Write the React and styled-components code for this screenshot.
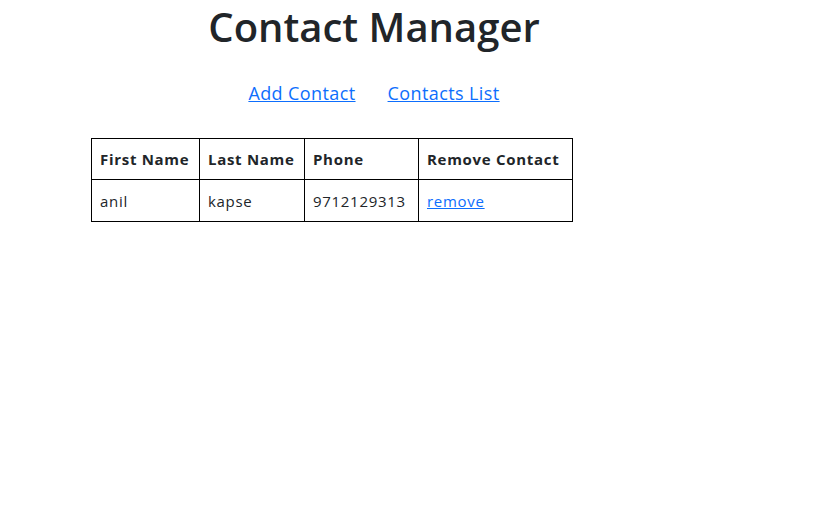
import React from "react";
import styled, { createGlobalStyle } from "styled-components";

const GlobalStyle = createGlobalStyle`
    body {
        margin: 0;
        background: #fff;
        color: #212529;
        font-family: "Open Sans", "Noto Sans", sans-serif;
    }
`;

const Page = styled.div`
    width: 748px;
    display: flex;
    flex-direction: column;
    align-items: center;
`;

const Title = styled.h1`
    margin: 0;
    font-size: 40px;
    font-weight: 600;
    line-height: 54px;
`;

const Nav = styled.nav`
    display: flex;
    gap: 32px;
    margin-top: 25px;
`;

const NavLink = styled.a`
    font-size: 18px;
    line-height: 28px;
    color: #0d6efd;
    text-decoration: underline;
    letter-spacing: 0.4px;
    cursor: pointer;
`;

const TableWrap = styled.div`
    align-self: flex-start;
    margin: 31px 0 0 91px;
`;

const Table = styled.table`
    border-collapse: collapse;
    font-size: 15px;
    letter-spacing: 0.7px;
    white-space: nowrap;
`;

const Th = styled.th`
    border: 1px solid #000;
    height: 41px;
    padding: 0 8px;
    text-align: left;
    font-weight: 700;
    width: ${(p) => p.$w}px;
    box-sizing: border-box;
`;

const Td = styled.td`
    border: 1px solid #000;
    height: 41px;
    padding: 0 8px;
    font-weight: 400;
`;

const RemoveLink = styled.a`
    color: #0d6efd;
    text-decoration: underline;
    cursor: pointer;
`;

const columns = [
    { label: "First Name", w: 108 },
    { label: "Last Name", w: 105 },
    { label: "Phone", w: 114 },
    { label: "Remove Contact", w: 154 },
];

const contacts = [{ first: "anil", last: "kapse", phone: "9712129313" }];

export default function App() {
    return (
        <>
            <GlobalStyle />
            <Page>
                <Title>Contact Manager</Title>
                <Nav>
                    <NavLink>Add Contact</NavLink>
                    <NavLink>Contacts List</NavLink>
                </Nav>
                <TableWrap>
                    <Table>
                        <thead>
                            <tr>
                                {columns.map((c) => (
                                    <Th key={c.label} $w={c.w}>{c.label}</Th>
                                ))}
                            </tr>
                        </thead>
                        <tbody>
                            {contacts.map((c) => (
                                <tr key={c.phone}>
                                    <Td>{c.first}</Td>
                                    <Td>{c.last}</Td>
                                    <Td>{c.phone}</Td>
                                    <Td><RemoveLink>remove</RemoveLink></Td>
                                </tr>
                            ))}
                        </tbody>
                    </Table>
                </TableWrap>
            </Page>
        </>
    );
}
